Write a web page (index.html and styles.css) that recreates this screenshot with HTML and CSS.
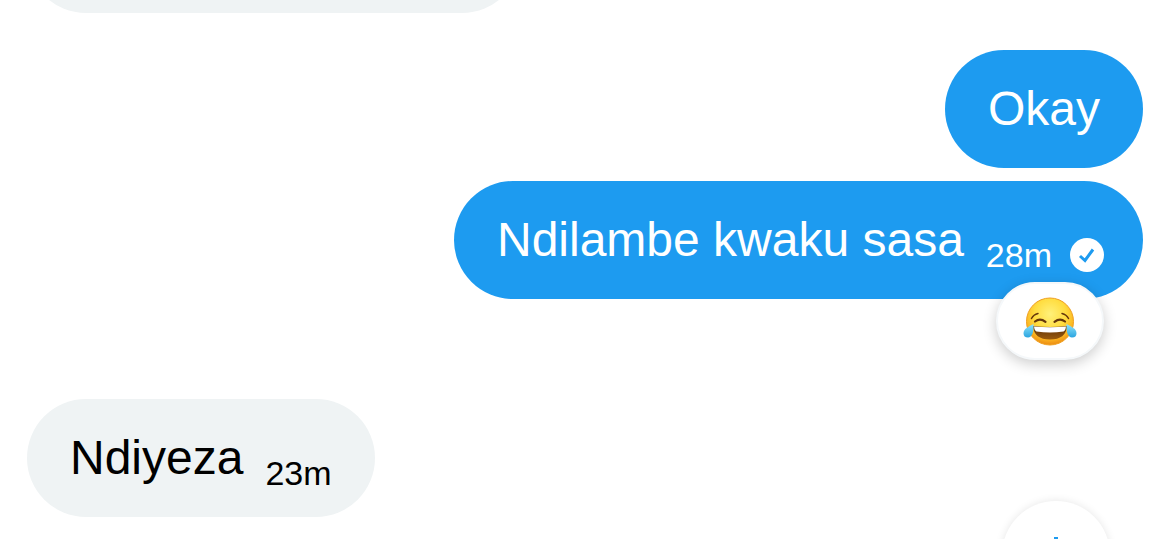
FILE: index.html
```html
<!DOCTYPE html>
<html lang="xh">
<head>
  <meta charset="UTF-8">
  <meta name="viewport" content="width=device-width, initial-scale=1">
  <title>Messages</title>
  <link rel="stylesheet" href="styles.css">
</head>
<body>

  <main class="conversation">

    <div class="message received">
      <div class="bubble previous"></div>
    </div>

    <div class="message sent new-group">
      <div class="bubble">
        <p class="text">Okay</p>
      </div>
    </div>

    <div class="message sent">
      <div class="bubble with-status">
        <p class="text">Ndilambe kwaku sasa</p>
        <span class="meta">
          <time>28m</time>
          <svg class="status" viewBox="0 0 34 34" aria-hidden="true">
            <circle cx="17" cy="17" r="17" fill="#fff"/>
            <path d="M10 18l5 4.500 8-11" fill="none" stroke="#1d9bf0" stroke-width="3"/>
          </svg>
        </span>
        <button class="reaction" type="button" aria-label="Reaction">
          <svg class="emoji" viewBox="0 -1 54 50" aria-hidden="true">
            <defs>
              <radialGradient id="face" cx="50%" cy="34%" r="68%">
                <stop offset="0" stop-color="#fff17a"/>
                <stop offset="0.5" stop-color="#ffdc3e"/>
                <stop offset="0.8" stop-color="#fbb320"/>
                <stop offset="1" stop-color="#e98410"/>
              </radialGradient>
              <linearGradient id="mouth" x1="0" y1="0" x2="0" y2="1">
                <stop offset="0" stop-color="#5c3009"/>
                <stop offset="1" stop-color="#9a5a0c"/>
              </linearGradient>
              <linearGradient id="tear" x1="0" y1="0" x2="0" y2="1">
                <stop offset="0" stop-color="#8fe3fb"/>
                <stop offset="1" stop-color="#2aa5e0"/>
              </linearGradient>
            </defs>
            <circle cx="27" cy="24.500" r="23.500" fill="url(#face)" stroke="#f0a020"/>
            <!-- brows and closed eyes -->
            <g fill="none" stroke="#65370b" stroke-linecap="round">
              <path d="M8.500 21.500q2-4 6.500-5M45.500 21.500q-2-4-6.500-5" stroke-width="1.500"/>
              <path d="M12 24.500q5-4 10.500 .3M42 24.500q-5-4-10.500 .3" stroke-width="2.200"/>
            </g>
            <!-- mouth -->
            <path d="M10 29q17 2 34 0q-1 13.500-17 13.500t-17-13.500z" fill="url(#mouth)"/>
            <path d="M11 29.500q16 1.500 32 0q-.3 4-2.500 5q-13.500 2-27 0q-2.200-1-2.500-5z" fill="#fff"/>
            <!-- tears -->
            <path d="M10.500 27q.5 13-5.500 13.500q-4.500 0-4.500-4.500q0-4.500 10-9z" fill="url(#tear)"/>
            <path d="M43.500 27q-.5 13 5.500 13.500q4.500 0 4.500-4.500q0-4.500-10-9z" fill="url(#tear)"/>
          </svg>
        </button>
      </div>
    </div>

    <div class="message received after-reaction">
      <div class="bubble">
        <p class="text">Ndiyeza</p>
        <span class="meta"><time>23m</time></span>
      </div>
    </div>

  </main>

  <button class="scroll-down" type="button" aria-label="Scroll to latest">
    <svg viewBox="0 0 36 36" aria-hidden="true">
      <path d="M18 0v33M5 20l13 13 13-13" fill="none" stroke="#1d9bf0" stroke-width="4"/>
    </svg>
  </button>

</body>
</html>
```
FILE: styles.css
```css
* {
  margin: 0;
  padding: 0;
  box-sizing: border-box;
}

body {
  font-family: "Liberation Sans", Arial, sans-serif;
  background: #fff;
  color: #000;
  overflow: hidden;
}

/* Messages stay anchored to the bottom of the window */
.conversation {
  display: flex;
  flex-direction: column;
  justify-content: flex-end;
  gap: 13px;
  height: 100vh;
  padding: 0 26px 22px 27px;
}

.message {
  display: flex;
  flex-shrink: 0;
}

.sent {
  justify-content: flex-end;
}

.new-group {
  margin-top: 24px;
}

.after-reaction {
  margin-top: 87px;
}

.bubble {
  position: relative;
  display: flex;
  align-items: flex-end;
  gap: 22px;
  min-height: 118px;
  padding: 30px 43px 24px;
  border-radius: 59px;
  background: #eff3f4;
}

.previous {
  width: 494px;
}

.sent .bubble {
  background: #1d9bf0;
  color: #fff;
}

.with-status {
  padding-right: 39px;
}

.text {
  margin-bottom: 6px;
  font-size: 48px;
  line-height: 58px;
}

.meta {
  display: flex;
  align-items: center;
  gap: 18px;
  font-size: 34px;
  line-height: 40px;
}

.status {
  width: 34px;
  height: 34px;
}

/* Reaction pill over the bubble's lower edge */
.reaction {
  position: absolute;
  right: 39px;
  bottom: -61px;
  display: flex;
  align-items: center;
  justify-content: center;
  width: 108px;
  height: 78px;
  border: 2px solid #f5f8fa;
  border-radius: 39px;
  background: #fff;
  box-shadow: 0 4px 14px rgba(0, 0, 0, 0.2);
  cursor: pointer;
}

.emoji {
  width: 54px;
  height: 50px;
}

.scroll-down {
  position: fixed;
  right: 59px;
  bottom: -70px;
  display: flex;
  align-items: center;
  justify-content: center;
  width: 108px;
  height: 108px;
  border: none;
  border-radius: 50%;
  background: #fff;
  box-shadow: 0 0 8px rgba(0, 0, 0, 0.1);
  cursor: pointer;
}

.scroll-down svg {
  width: 36px;
  height: 36px;
}
```
